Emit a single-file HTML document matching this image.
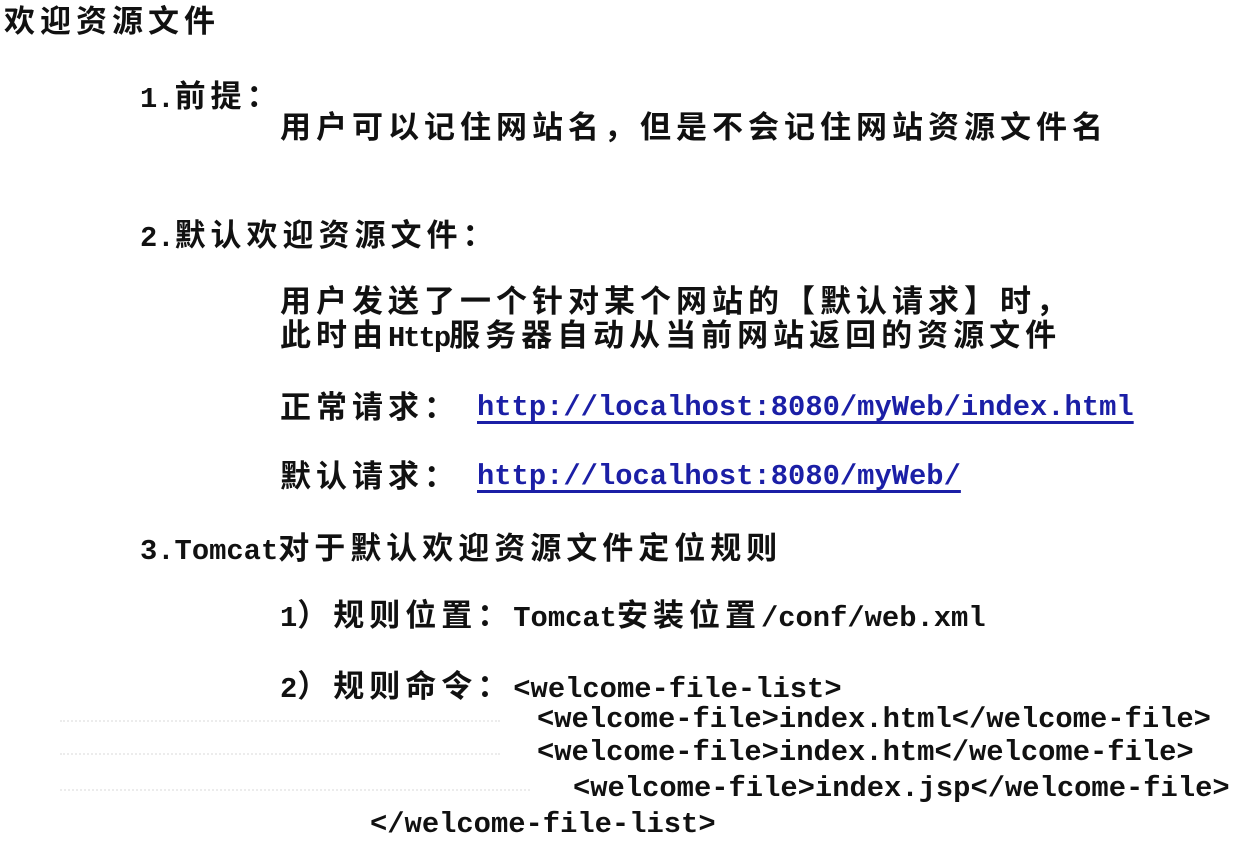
<!DOCTYPE html>
<html><head><meta charset="utf-8"><style>
body{margin:0;width:1246px;height:850px;background:#fff;overflow:hidden;position:relative;color:#111;}
.l{position:absolute;white-space:pre;line-height:36px;height:36px;font-weight:bold;}
.c{font-family:"Liberation Sans","Noto Sans CJK SC",sans-serif;font-size:31px;letter-spacing:5px;font-weight:bold;}
.m{font-family:"Liberation Mono","Noto Sans CJK SC",monospace;font-size:28.8px;letter-spacing:0;font-weight:bold;}
a{color:#1b1fa6;text-decoration:underline;text-decoration-thickness:3px;text-underline-offset:6px;}
.dots{position:absolute;left:60px;height:0;border-top:2px dotted #ececec;}
</style></head><body>
<div class="l c" style="left:4px;top:4px;">欢迎资源文件</div>
<div class="l" style="left:140px;top:79px;"><span class="m">1.</span><span class="c">前提：</span></div>
<div class="l c" style="left:280px;top:110px;">用户可以记住网站名，但是不会记住网站资源文件名</div>
<div class="l" style="left:140px;top:218px;"><span class="m">2.</span><span class="c">默认欢迎资源文件：</span></div>
<div class="l c" style="left:280px;top:284px;">用户发送了一个针对某个网站的【默认请求】时，</div>
<div class="l" style="left:280px;top:318px;"><span class="c">此时由</span><span class="m" style="letter-spacing:-2px">Http</span><span class="c">服务器自动从当前网站返回的资源文件</span></div>
<div class="l c" style="left:280px;top:390px;">正常请求：</div>
<div class="l m" style="left:477px;top:390px;"><a>http://localhost:8080/myWeb/index.html</a></div>
<div class="l c" style="left:280px;top:459px;">默认请求：</div>
<div class="l m" style="left:477px;top:459px;"><a>http://localhost:8080/myWeb/</a></div>
<div class="l" style="left:140px;top:531px;"><span class="m">3.Tomcat</span><span class="c">对于默认欢迎资源文件定位规则</span></div>
<div class="l" style="left:280px;top:598px;"><span class="m">1</span><span class="c">）规则位置：</span><span class="m">Tomcat</span><span class="c">安装位置</span><span class="m">/conf/web.xml</span></div>
<div class="l" style="left:280px;top:669px;"><span class="m">2</span><span class="c">）规则命令：</span><span class="m">&lt;welcome-file-list&gt;</span></div>
<div class="dots" style="top:720px;width:440px;"></div>
<div class="dots" style="top:753px;width:440px;"></div>
<div class="dots" style="top:789px;width:470px;"></div>
<div class="l m" style="left:537px;top:702px;">&lt;welcome-file&gt;index.html&lt;/welcome-file&gt;</div>
<div class="l m" style="left:537px;top:735px;">&lt;welcome-file&gt;index.htm&lt;/welcome-file&gt;</div>
<div class="l m" style="left:573px;top:771px;">&lt;welcome-file&gt;index.jsp&lt;/welcome-file&gt;</div>
<div class="l m" style="left:370px;top:807px;">&lt;/welcome-file-list&gt;</div>
</body></html>
